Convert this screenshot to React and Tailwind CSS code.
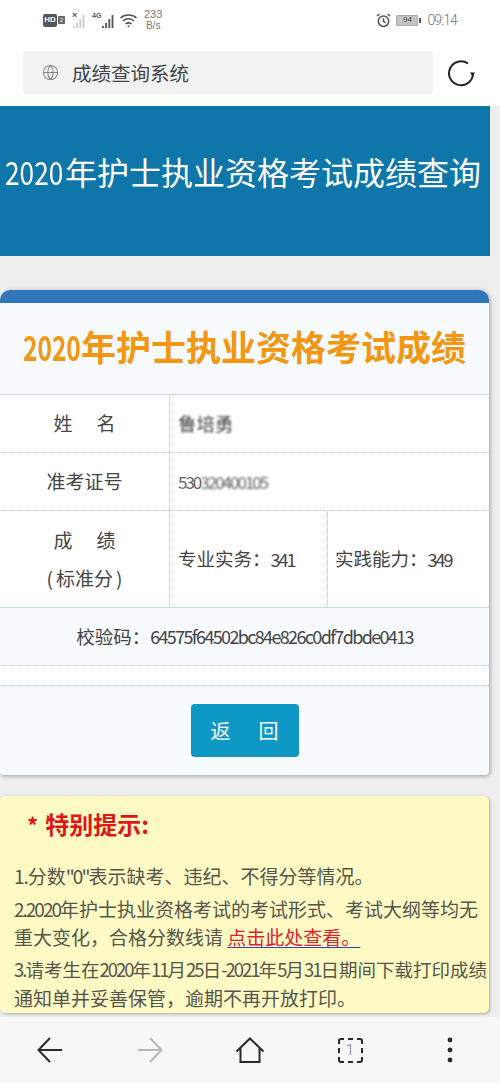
import { Globe } from "lucide-react";

const cjk = { fontFamily: '"Noto Sans CJK SC", "Noto Sans", sans-serif' };

function Signal({ bars, dim }) {
  return (
    <svg width="15" height="14" viewBox="0 0 15 14" className={dim ? "text-[#c9c9c9]" : "text-[#555]"}>
      {bars.map((h, i) => (
        <rect key={i} x={i * 3.2 + 1} y={14 - h} width="1.8" height={h} fill="currentColor" />
      ))}
    </svg>
  );
}

function StatusBar() {
  return (
    <div className="flex h-[40px] items-center justify-between pl-[43px] pr-[43px]">
      {/* left icons */}
      <div className="flex items-center">
        <div className="flex h-[13px] w-[14px] items-center justify-center rounded-[2px] bg-[#555] text-[8px] font-bold leading-none text-white" style={{ fontFamily: "Liberation Sans" }}>
          HD
        </div>
        <div className="ml-[1px] flex h-[8px] w-[7px] items-center justify-center rounded-[1px] bg-[#666] text-[6px] leading-none text-white" style={{ fontFamily: "Liberation Sans" }}>
          2
        </div>
        <div className="relative ml-[7px] h-[16px] w-[15px]">
          <span className="absolute left-0 top-[-3px] text-[9px] font-bold text-[#555]" style={{ fontFamily: "Liberation Sans" }}>×</span>
          <div className="absolute bottom-0 right-0">
            <Signal bars={[2, 5, 9, 13]} dim />
          </div>
        </div>
        <div className="relative ml-[5px] h-[16px] w-[24px]">
          <span className="absolute left-0 top-[-1px] text-[7px] font-bold leading-[10px] text-[#555]" style={{ fontFamily: "Liberation Sans" }}>4G</span>
          <div className="absolute bottom-0 right-0">
            <Signal bars={[2, 5, 9, 13]} />
          </div>
        </div>
        <svg width="19" height="15" viewBox="0 0 18 15" fill="none" stroke="#555" strokeWidth="1.5" className="ml-[3px]">
          <path d="M1 5 C5 1 13 1 17 5" />
          <path d="M3.5 8 C6.5 5 11.5 5 14.5 8" />
          <path d="M6 11 C8 9.5 10 9.5 12 11" />
          <circle cx="9" cy="13.2" r="1" fill="#555" stroke="none" />
        </svg>
        <div className="ml-[6px] flex flex-col items-center text-[10px] leading-[12px] text-[#777]" style={{ fontFamily: "Liberation Sans" }}>
          <span className="text-[11px]">233</span>
          <span>B/s</span>
        </div>
      </div>
      {/* right icons */}
      <div className="flex items-center">
        <svg width="15" height="15" viewBox="0 0 15 15" fill="none" stroke="#555" strokeWidth="1.5">
          <circle cx="7.5" cy="8.2" r="5.2" />
          <path d="M7.5 5.2 V8.4 L9.6 9.8" />
          <path d="M1 3 L3.4 1 M14 3 L11.6 1" />
        </svg>
        <div className="ml-[5px] flex items-center">
          <div className="flex h-[11px] w-[22px] items-center justify-center rounded-[1px] border border-[#aaa] bg-[#c4c4c4] text-[8px] leading-none text-[#444]" style={{ fontFamily: "Liberation Sans" }}>
            94
          </div>
          <div className="ml-[1px] h-[5px] w-[2px] bg-[#555]" />
        </div>
        <span className="ml-[6px] text-[14px] font-light tracking-[-0.9px] text-[#777]" style={{ fontFamily: "Roboto" }}>09:14</span>
      </div>
    </div>
  );
}

function Row({ h, className = "", children }) {
  return <div className={`flex ${h} ${className}`}>{children}</div>;
}

function Label({ children }) {
  return (
    <div className="flex w-[170px] shrink-0 flex-col items-center justify-center border-r border-dotted border-[#b9ccd6] text-[19px] text-[#444]">
      {children}
    </div>
  );
}

function Cell({ label, value, className = "" }) {
  return (
    <div className={`flex items-center text-[#444] ${className}`}>
      <span className="text-[18.5px]">{label}</span>
      <span className="text-[18px] tracking-[-2px]">{value}</span>
    </div>
  );
}

// narrow digits, same look as the phone's font
const N = ({ children }) => <span className="tracking-[-2px]">{children}</span>;

export default function App() {
  return (
    <div className="h-[1083px] w-[500px] overflow-hidden bg-[#eeeeee]" style={cjk}>
      {/* browser top */}
      <div className="h-[106px] bg-white">
        <StatusBar />
        <div className="mt-[11px] flex items-center pl-[23px]">
          <div className="flex h-[43px] w-[410px] items-center rounded-[4px] bg-[#f1f3f3] pl-[19px]">
            <Globe size={17} strokeWidth={1.5} className="text-[#888]" />
            <span className="ml-[13px] text-[19.5px] text-[#444]">成绩查询系统</span>
          </div>
          <svg width="28" height="28" viewBox="0 0 28 28" fill="none" stroke="#222" strokeWidth="2" className="ml-[14px]">
            <path d="M21 4.5 A12 12 0 1 0 26 15" />
            <path d="M23 13.5 L28 13.5 L25.5 17.5 Z" fill="#222" stroke="none" />
          </svg>
        </div>
      </div>

      {/* banner */}
      <div className="flex h-[150px] w-[490px] items-center justify-center bg-[#0f76a9] pb-[20px] pr-[4px]">
        <h1 className="flex whitespace-nowrap text-[32px] font-normal leading-none text-white">
          <span className="inline-block w-[60px] origin-left scale-x-[0.82]">2020</span>
          年护士执业资格考试成绩查询
        </h1>
      </div>

      {/* result card */}
      <div className="mt-[34px] h-[485px] w-[489px] overflow-hidden rounded-b-[4px] rounded-t-[10px] bg-[#f8fbfd] shadow-[1px_1px_4px_rgba(0,0,0,0.35)]">
        <div className="h-[13px] bg-[#3176b9]" />
        <div className="flex h-[92px] items-center justify-center border-b border-[#c5dbe6] pb-[6px]">
          <h2 className="flex whitespace-nowrap text-[35px] font-bold leading-none text-[#f39712]">
            <span className="inline-block w-[58px] origin-left scale-x-[0.7]">2020</span>
            年护士执业资格考试成绩
          </h2>
        </div>

        <Row h="h-[58px]" className="border-b border-dotted border-[#b9ccd6] bg-white">
          <Label>
            <span className="flex gap-[24px]">
              <span>姓</span>
              <span>名</span>
            </span>
          </Label>
          <div className="flex items-center pl-[8px] text-[18.5px] text-[#444] blur-[1.2px]">鲁培勇</div>
        </Row>
        <Row h="h-[58px]" className="border-b border-dotted border-[#b9ccd6] bg-white">
          <Label>准考证号</Label>
          <div className="flex items-center pl-[8px] text-[17px] tracking-[-2px] text-[#666]">
            <span>530</span>
            <span className="blur-[1.2px]">320400105</span>
          </div>
        </Row>
        <Row h="h-[97px]" className="border-b border-[#c5dbe6] bg-white">
          <Label>
            <span className="flex gap-[24px] leading-[38px]">
              <span>成</span>
              <span>绩</span>
            </span>
            <span className="flex leading-[38px]">
              <span>(</span>
              <span className="mx-[3px]">标准分</span>
              <span>)</span>
            </span>
          </Label>
          <Cell label="专业实务：" value="341" className="w-[158px] border-r border-dotted border-[#b9ccd6] pl-[8px]" />
          <Cell label="实践能力：" value="349" className="pl-[7px]" />
        </Row>
        <div className="flex h-[58px] items-center justify-center border-b border-dotted border-[#b9ccd6] text-[#444]">
          <span className="text-[18.5px]">校验码：</span>
          <span className="text-[18px] tracking-[-1.65px]">64575f64502bc84e826c0df7dbde0413</span>
        </div>
        <div className="h-[20px] border-b border-dotted border-[#b9ccd6] bg-white" />
        <div className="flex justify-center pt-[18px]">
          <button className="flex h-[53px] w-[108px] items-center justify-center gap-[28px] rounded-[4px] bg-[#0e98c6] text-[20px] text-white">
            <span>返</span>
            <span>回</span>
          </button>
        </div>
      </div>

      {/* notice */}
      <div className="mt-[21px] h-[217px] w-[489px] overflow-hidden rounded-[5px] bg-[#fdfac4] pl-[14px] text-[19px] text-[#55554c] shadow-[1px_1px_3px_rgba(0,0,0,0.3)]">
        <div className="flex h-[56px] items-center pl-[13px] text-[24px] font-bold text-[#e01515]">
          <span className="mr-[7px] text-[22px]">*</span>
          特别提示:
        </div>
        <p className="mt-[10px] whitespace-nowrap leading-[28px]">
          <span className="tracking-[-1px]">1.</span>分数<N>"0"</N>表示缺考、违纪、不得分等情况。
        </p>
        <p className="mt-[5px] whitespace-nowrap leading-[27.5px]">
          <N>2.2020</N>年护士执业资格考试的考试形式、考试大纲等均无
          <br />
          重大变化，合格分数线请{" "}
          <a className="text-[#d8242c] underline decoration-[#3040b0] underline-offset-[2px]">点击此处查看。</a>
        </p>
        <p className="mt-[6px] whitespace-nowrap text-[18.5px] leading-[27.5px]">
          <N>3.</N>请考生在<N>2020</N>年<N>11</N>月<N>25</N>日<N>-2021</N>年<N>5</N>月<N>31</N>日期间下载打印成绩
          <br />
          <span className="text-[19px]">通知单并妥善保管，逾期不再开放打印。</span>
        </p>
      </div>

      {/* bottom nav */}
      <div className="mt-[4px] grid h-[66px] grid-cols-5 items-center justify-items-center bg-[#f7f7f8]">
        <svg width="26" height="26" viewBox="0 0 26 26" fill="none" stroke="#2a2a2a" strokeWidth="2">
          <path d="M25 13 H2 M13 1 L1.5 13 L13 25" />
        </svg>
        <svg width="26" height="26" viewBox="0 0 26 26" fill="none" stroke="#b8b8b8" strokeWidth="2">
          <path d="M1 13 H24 M13 1 L24.5 13 L13 25" />
        </svg>
        <svg width="30" height="26" viewBox="0 0 30 26" fill="none" stroke="#2a2a2a" strokeWidth="2">
          <path d="M1.5 14.5 L15 1.5 L28.5 14.5 M5.5 11.5 V25 H24.5 V11.5" />
        </svg>
        <div className="relative flex h-[25px] w-[25px] items-center justify-center">
          <svg width="25" height="25" viewBox="0 0 25 25" fill="none" stroke="#2a2a2a" strokeWidth="2" className="absolute inset-0">
            <path d="M1 6 V3 Q1 1 3 1 H6 M10 1 H15 M19 1 H22 Q24 1 24 3 V6 M24 10 V15 M24 19 V22 Q24 24 22 24 H19 M15 24 H10 M6 24 H3 Q1 24 1 22 V19 M1 15 V10" />
          </svg>
          <span className="text-[15px] font-light text-[#777]" style={{ fontFamily: "Roboto" }}>1</span>
        </div>
        <svg width="6" height="26" viewBox="0 0 6 26">
          <circle cx="3" cy="3" r="2.4" fill="#2a2a2a" />
          <circle cx="3" cy="13" r="2.4" fill="#2a2a2a" />
          <circle cx="3" cy="23" r="2.4" fill="#2a2a2a" />
        </svg>
      </div>
    </div>
  );
}
